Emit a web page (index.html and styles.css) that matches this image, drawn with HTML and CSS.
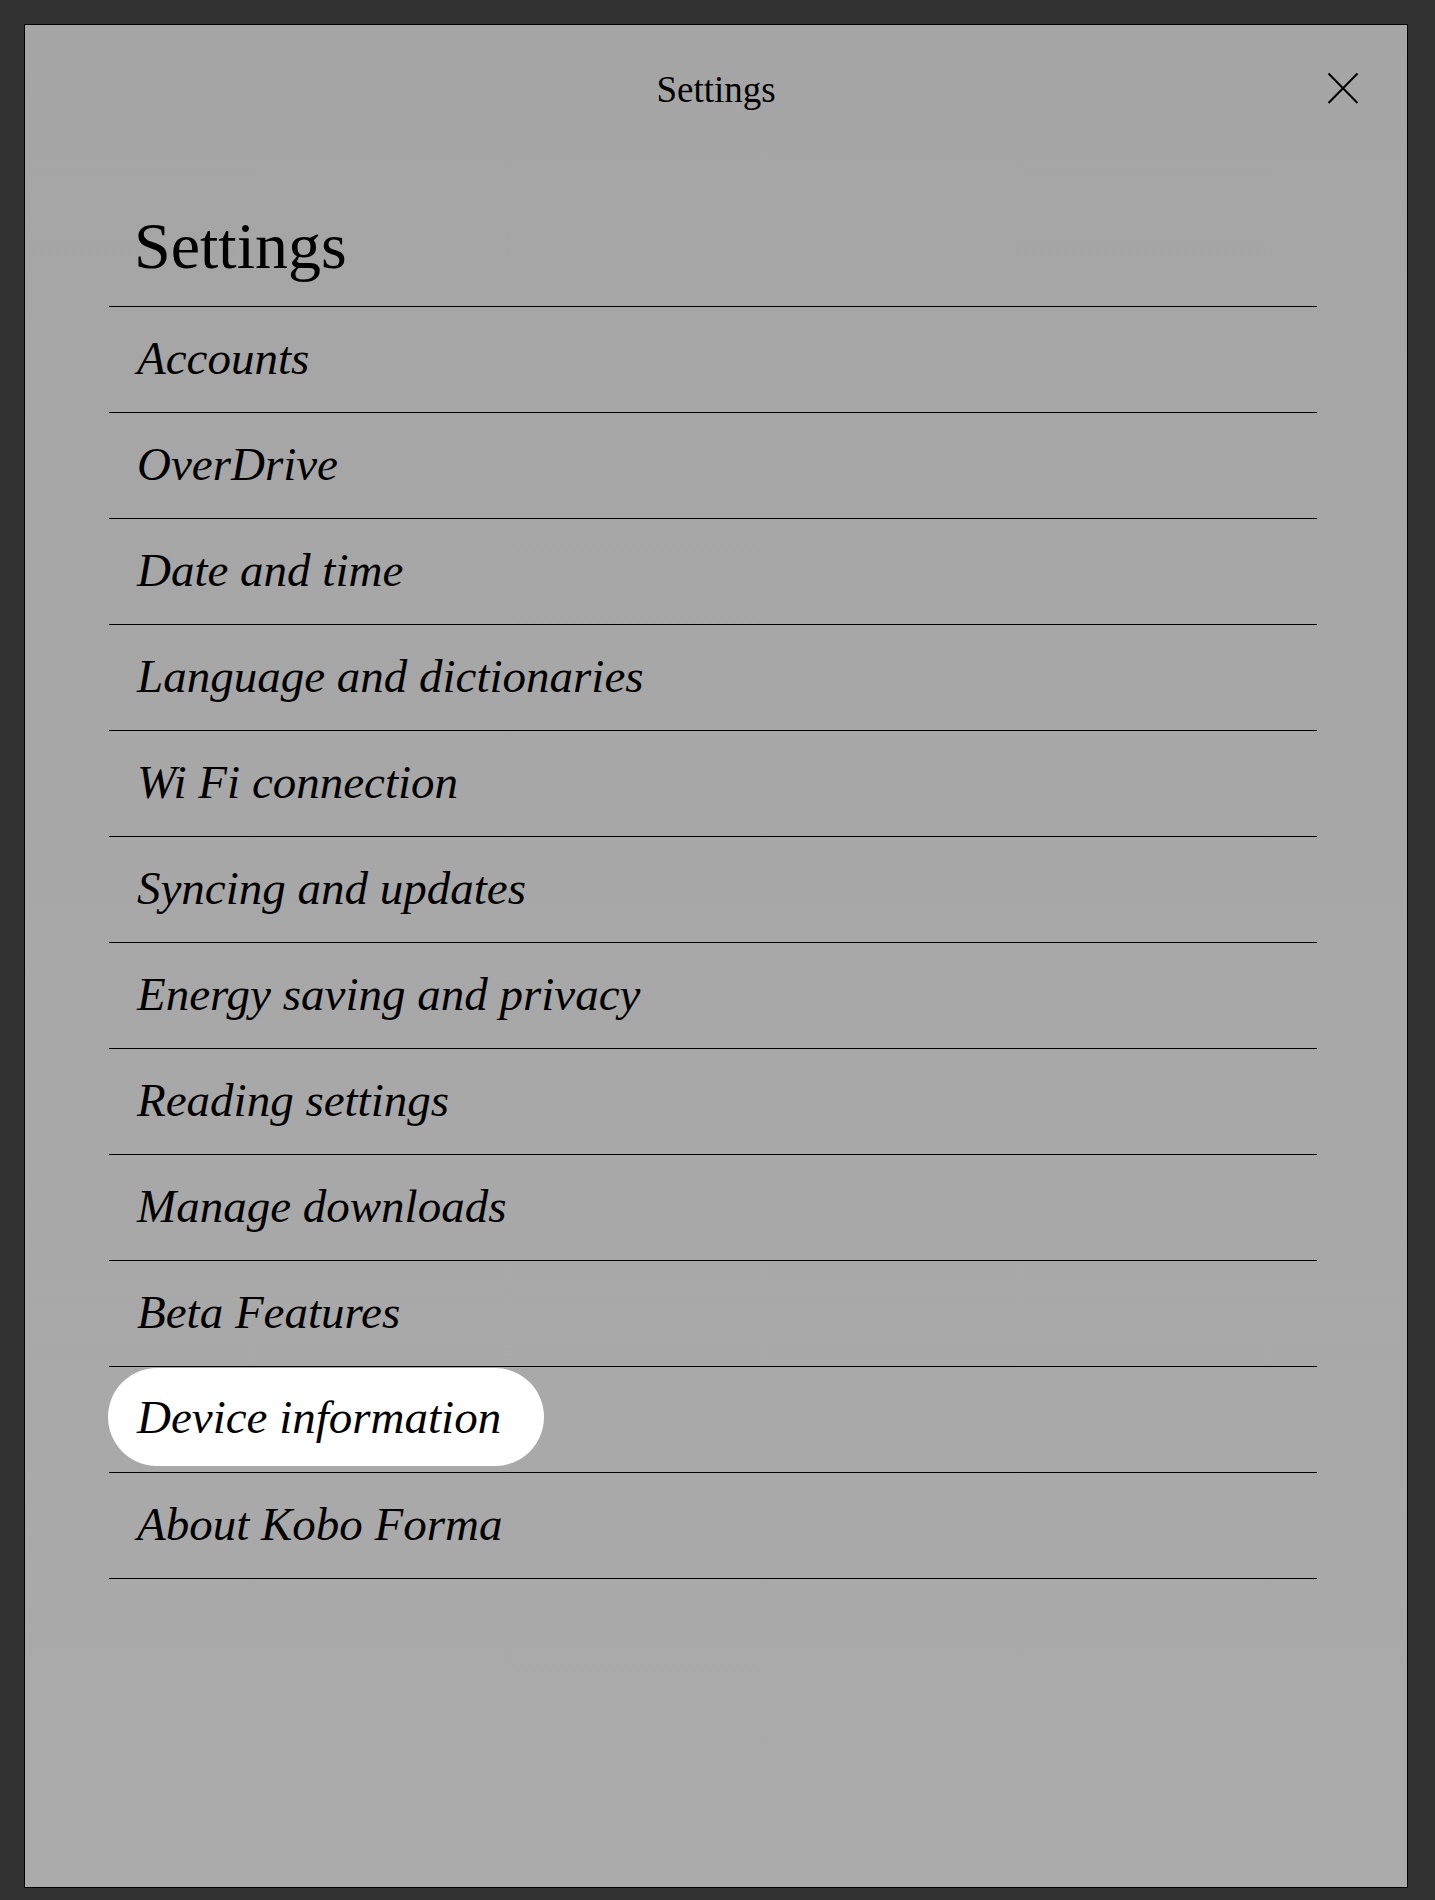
FILE: index.html
```html
<!DOCTYPE html>
<html lang="en">
<head>
<meta charset="utf-8">
<title>Settings</title>
<link rel="stylesheet" href="styles.css">
</head>
<body>
<div class="panel">
  <header class="topbar">
    <div class="spacer"></div>
    <div class="title">Settings</div>
    <div class="close-wrap">
      <svg class="close" viewBox="0 0 32 32" width="32" height="32" aria-label="Close">
        <line x1="1.5" y1="1.5" x2="30.5" y2="31" stroke="#000" stroke-width="2"/>
        <line x1="30.5" y1="1.5" x2="1.5" y2="31" stroke="#000" stroke-width="2"/>
      </svg>
    </div>
  </header>
  <main class="content">
    <h1 class="heading">Settings</h1>
    <ul class="menu">
      <li class="item">Accounts</li>
      <li class="item">OverDrive</li>
      <li class="item">Date and time</li>
      <li class="item">Language and dictionaries</li>
      <li class="item">Wi Fi connection</li>
      <li class="item">Syncing and updates</li>
      <li class="item">Energy saving and privacy</li>
      <li class="item">Reading settings</li>
      <li class="item">Manage downloads</li>
      <li class="item">Beta Features</li>
      <li class="item item-selected"><span class="pill">Device information</span></li>
      <li class="item">About Kobo Forma</li>
    </ul>
  </main>
</div>
</body>
</html>
```
FILE: styles.css
```css
html, body {
  margin: 0;
  padding: 0;
}
body {
  background: #313131;
  padding: 24px 27px 12px 24px;
  font-family: "Liberation Serif", "Times New Roman", serif;
  color: #000;
}
.panel {
  box-sizing: border-box;
  height: 1864px;
  border: 1px solid #000;
  background: linear-gradient(#a5a5a5, #aaaaaa);
  display: flex;
  flex-direction: column;
}
.topbar {
  display: grid;
  grid-template-columns: 1fr auto 1fr;
  padding-top: 45px;
  height: 40px;
}
.title {
  font-size: 37px;
  line-height: 40px;
  text-align: center;
}
.close-wrap {
  display: flex;
  justify-content: flex-end;
  align-items: flex-start;
  padding-right: 48px;
  padding-top: 2px;
}
.close {
  display: block;
}
.content {
  margin: 99px 90px 0 84px;
}
.heading {
  margin: 0;
  font-weight: normal;
  font-size: 66px;
  line-height: 73px;
  padding: 0 0 24px 25px;
  border-bottom: 1px solid #000;
}
.menu {
  list-style: none;
  margin: 0;
  padding: 0;
}
.item {
  box-sizing: border-box;
  height: 106px;
  border-bottom: 1px solid #000;
  padding-left: 28px;
  font-style: italic;
  font-size: 47px;
  line-height: 103px;
  white-space: nowrap;
}
.item-selected {
  padding-left: 0;
  padding-top: 1px;
}
.pill {
  display: inline-block;
  vertical-align: top;
  margin-left: -1px;
  height: 98px;
  line-height: 98px;
  padding: 0 43px 0 29px;
  background: #fff;
  border-radius: 49px;
}
```
